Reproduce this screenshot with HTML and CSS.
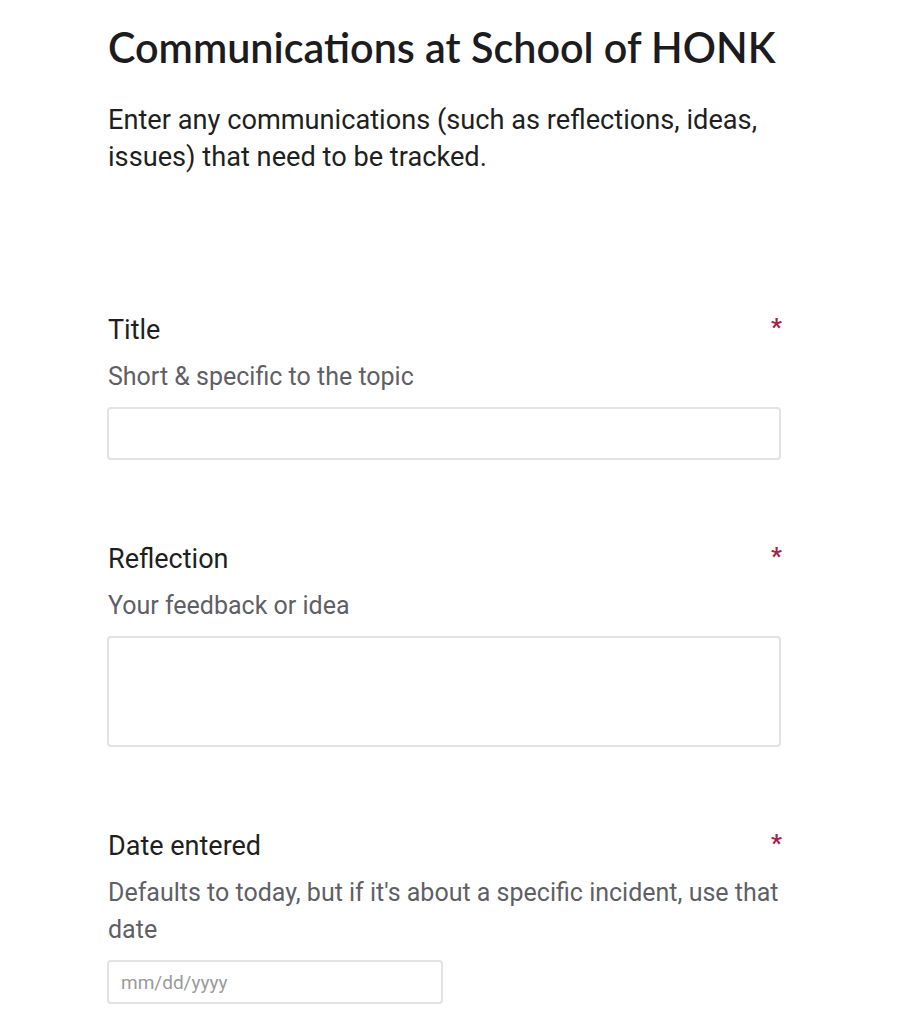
FILE: index.html
```html
<!DOCTYPE html>
<html lang="en">

<head>
    <meta charset="UTF-8">
    <meta name="viewport" content="width=device-width, initial-scale=1.0">
    <title>Communications at School of HONK</title>
    <link rel="stylesheet" href="styles.css">
</head>

<body>
    <div class="container">

        <h1>Communications at School of HONK</h1>
        <p class="intro">Enter any communications (such as reflections, ideas, issues) that need to be tracked.</p>

        <div class="field">
            <div class="label-row">
                <label for="title">Title</label>
                <span class="required">*</span>
            </div>
            <div class="hint">Short &amp; specific to the topic</div>
            <input type="text" id="title" class="textbox">
        </div>

        <div class="field">
            <div class="label-row">
                <label for="reflection">Reflection</label>
                <span class="required">*</span>
            </div>
            <div class="hint">Your feedback or idea</div>
            <textarea id="reflection" class="textbox area"></textarea>
        </div>

        <div class="field">
            <div class="label-row">
                <label for="dateEntered">Date entered</label>
                <span class="required">*</span>
            </div>
            <div class="hint">Defaults to today, but if it's about a specific incident, use that date</div>
            <input type="text" id="dateEntered" class="textbox date" placeholder="mm/dd/yyyy">
        </div>
    </div>
</body>

</html>
```

FILE: styles.css
```css
body {
    margin: 0;
    background-color: white;
    color: #1f1f22;
    font-family: Roboto, "Liberation Sans", sans-serif;
}

.container {
    width: 674px;
    margin-left: 107px;
    padding-top: 20px;
}

h1 {
    font-family: Lato, "Noto Sans", sans-serif;
    font-weight: 600;
    font-size: 41.3px;
    line-height: 54px;
    margin: 0 0 0 1px;
    white-space: nowrap;
    color: #1c1c20;
}

.intro {
    font-size: 27.2px;
    line-height: 37px;
    margin: 28px 0 0 1px;
}

.field {
    margin-top: 136px;
}

.field + .field {
    margin-top: 81px;
}

.label-row {
    display: flex;
    justify-content: space-between;
    align-items: flex-start;
    padding-left: 1px;
}

label {
    font-size: 27px;
    line-height: 37px;
}

.required {
    color: #a3234a;
    font-size: 24px;
    font-weight: bold;
    line-height: 30px;
    margin-right: -1px;
}

.hint {
    color: #5f5f66;
    font-size: 25px;
    line-height: 37px;
    margin-top: 9px;
    padding-left: 1px;
}

.textbox {
    display: block;
    box-sizing: border-box;
    width: 100%;
    height: 53px;
    margin-top: 12px;
    border: 2px solid #e3e3e3;
    border-radius: 4px;
    background: white;
    font-family: inherit;
    font-size: 20px;
}

.area {
    height: 111px;
    resize: none;
}

.date {
    width: 336px;
    height: 44px;
    padding: 0 12px;
    font-size: 19px;
}

.date::placeholder {
    color: #9a9a9a;
}
```
